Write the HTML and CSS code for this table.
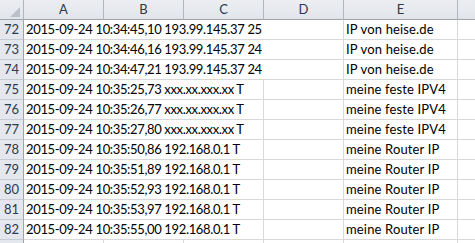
FILE: index.html
```html
<!DOCTYPE html>
<html>
<head>
<meta charset="utf-8">
<link rel="stylesheet" href="styles.css">
</head>
<body>
<div class="sheet">
  <div class="hd corner"><span class="tri"></span></div>
  <div class="hd col">A</div>
  <div class="hd col">B</div>
  <div class="hd col">C</div>
  <div class="hd col">D</div>
  <div class="hd col">E</div>
  <div class="hd col last"></div>

  <div class="hd rn">72</div><div class="c log span4">2015-09-24 10:34:45,10 193.99.145.37 25</div><div class="c note">IP von heise.de</div><div class="c last"></div>
  <div class="hd rn">73</div><div class="c log span4">2015-09-24 10:34:46,16 193.99.145.37 24</div><div class="c note">IP von heise.de</div><div class="c last"></div>
  <div class="hd rn">74</div><div class="c log span4">2015-09-24 10:34:47,21 193.99.145.37 24</div><div class="c note">IP von heise.de</div><div class="c last"></div>
  <div class="hd rn">75</div><div class="c log span3">2015-09-24 10:35:25,73 xxx.xx.xxx.xx T</div><div class="c"></div><div class="c note">meine feste IPV4</div><div class="c last"></div>
  <div class="hd rn">76</div><div class="c log span3">2015-09-24 10:35:26,77 xxx.xx.xxx.xx T</div><div class="c"></div><div class="c note">meine feste IPV4</div><div class="c last"></div>
  <div class="hd rn">77</div><div class="c log span3">2015-09-24 10:35:27,80 xxx.xx.xxx.xx T</div><div class="c"></div><div class="c note">meine feste IPV4</div><div class="c last"></div>
  <div class="hd rn">78</div><div class="c log span3">2015-09-24 10:35:50,86 192.168.0.1 T</div><div class="c"></div><div class="c note">meine Router IP</div><div class="c last"></div>
  <div class="hd rn">79</div><div class="c log span3">2015-09-24 10:35:51,89 192.168.0.1 T</div><div class="c"></div><div class="c note">meine Router IP</div><div class="c last"></div>
  <div class="hd rn">80</div><div class="c log span3">2015-09-24 10:35:52,93 192.168.0.1 T</div><div class="c"></div><div class="c note">meine Router IP</div><div class="c last"></div>
  <div class="hd rn">81</div><div class="c log span3">2015-09-24 10:35:53,97 192.168.0.1 T</div><div class="c"></div><div class="c note">meine Router IP</div><div class="c last"></div>
  <div class="hd rn">82</div><div class="c log span3">2015-09-24 10:35:55,00 192.168.0.1 T</div><div class="c"></div><div class="c note">meine Router IP</div><div class="c last"></div>

  <div class="hd rn"></div><div class="c"></div><div class="c"></div><div class="c"></div><div class="c"></div><div class="c"></div><div class="c last"></div>
</div>
</body>
</html>
```
FILE: styles.css
```css
html, body {
  margin: 0;
  padding: 0;
  background: #ffffff;
}
.sheet {
  display: grid;
  grid-template-columns: 24px 80px 80px 80px 80px 114px 1fr;
  grid-auto-rows: 20px;
  width: 475px;
  height: 243px;
  overflow: hidden;
  font-family: Lato, "Liberation Sans", sans-serif;
  font-size: 13px;
}
.hd {
  box-sizing: border-box;
  background: linear-gradient(#eceef2, #e1e5ea);
  border-right: 1px solid #b2b7be;
  border-bottom: 1px solid #c7cbd1;
  color: #2b3a4c;
  display: flex;
  align-items: flex-end;
  justify-content: center;
  padding-bottom: 2px;
  line-height: 15px;
}
.col {
  border-bottom: 1px solid #9ea4ac;
}
.corner {
  border-bottom: 1px solid #9ea4ac;
  position: relative;
}
.tri {
  position: absolute;
  right: 3px;
  bottom: 2px;
  width: 0;
  height: 0;
  border-left: 10px solid transparent;
  border-bottom: 10px solid #bcc1c8;
}
.rn {
  background: #e4e8ee;
  border-right: 1px solid #9ea4ac;
}
.hd.last, .c.last {
  border-right: none;
}
.c {
  box-sizing: border-box;
  border-right: 1px solid #d6d8db;
  border-bottom: 1px solid #d6d8db;
  color: #000;
  white-space: nowrap;
  padding: 0 0 2px 2px;
  display: flex;
  align-items: flex-end;
  line-height: 15px;
}
.log {
  letter-spacing: -0.35px;
}
.note {
  letter-spacing: 0.15px;
}
.span4 {
  grid-column: span 4;
}
.span3 {
  grid-column: span 3;
}
```
